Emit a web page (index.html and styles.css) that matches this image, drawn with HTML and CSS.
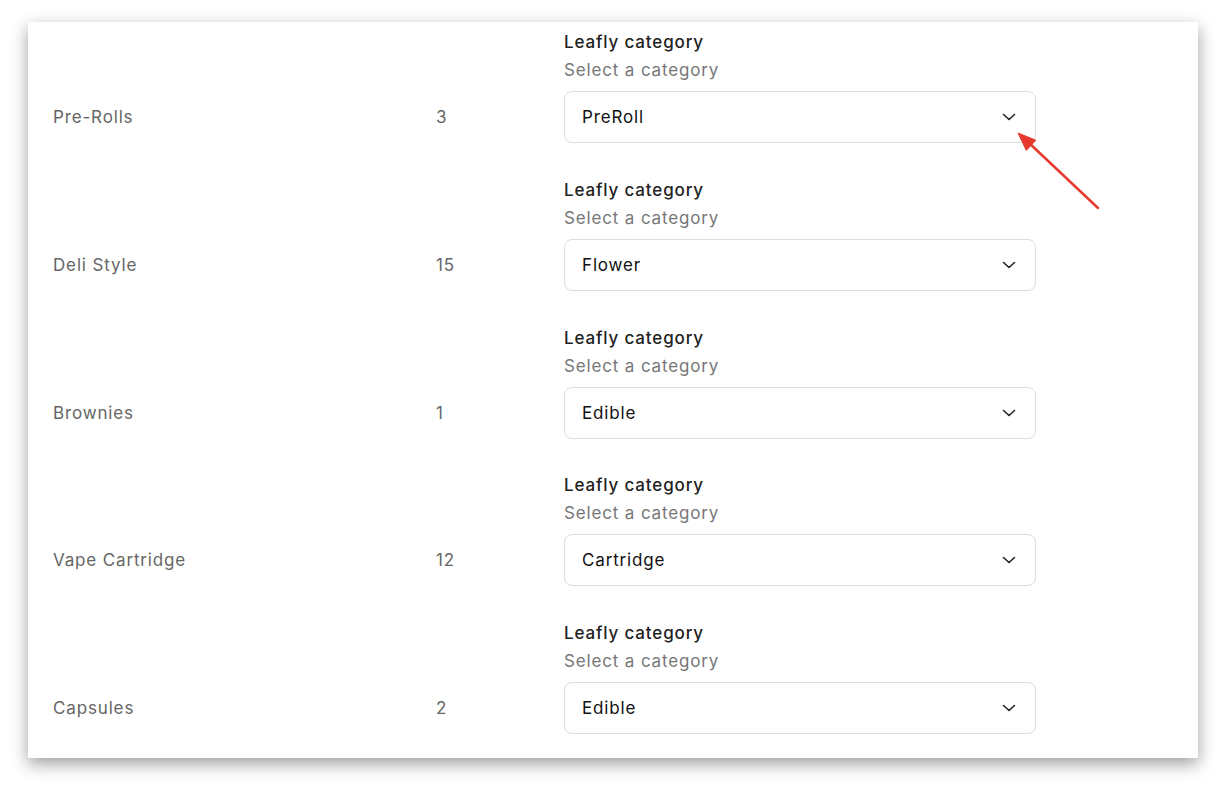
FILE: index.html
```html
<!DOCTYPE html>
<html lang="en">
<head>
    <meta charset="UTF-8">
    <title>Leafly category mapping</title>
    <link rel="stylesheet" href="styles.css">
</head>
<body>
    <div class="card">
        <div class="row">
            <div class="name">Pre-Rolls</div>
            <div class="count">3</div>
            <div class="field">
                <div class="label">Leafly category</div>
                <div class="hint">Select a category</div>
                <div class="select">
                    <span>PreRoll</span>
                    <svg class="chevron" width="16" height="16" viewBox="0 0 16 16"><path d="M2.5 5.5 8 10.5l5.5-5" fill="none" stroke="#222" stroke-width="1.6" stroke-linecap="round" stroke-linejoin="round"/></svg>
                </div>
            </div>
        </div>
        <div class="row">
            <div class="name">Deli Style</div>
            <div class="count">15</div>
            <div class="field">
                <div class="label">Leafly category</div>
                <div class="hint">Select a category</div>
                <div class="select">
                    <span>Flower</span>
                    <svg class="chevron" width="16" height="16" viewBox="0 0 16 16"><path d="M2.5 5.5 8 10.5l5.5-5" fill="none" stroke="#222" stroke-width="1.6" stroke-linecap="round" stroke-linejoin="round"/></svg>
                </div>
            </div>
        </div>
        <div class="row">
            <div class="name">Brownies</div>
            <div class="count">1</div>
            <div class="field">
                <div class="label">Leafly category</div>
                <div class="hint">Select a category</div>
                <div class="select">
                    <span>Edible</span>
                    <svg class="chevron" width="16" height="16" viewBox="0 0 16 16"><path d="M2.5 5.5 8 10.5l5.5-5" fill="none" stroke="#222" stroke-width="1.6" stroke-linecap="round" stroke-linejoin="round"/></svg>
                </div>
            </div>
        </div>
        <div class="row">
            <div class="name">Vape Cartridge</div>
            <div class="count">12</div>
            <div class="field">
                <div class="label">Leafly category</div>
                <div class="hint">Select a category</div>
                <div class="select">
                    <span>Cartridge</span>
                    <svg class="chevron" width="16" height="16" viewBox="0 0 16 16"><path d="M2.5 5.5 8 10.5l5.5-5" fill="none" stroke="#222" stroke-width="1.6" stroke-linecap="round" stroke-linejoin="round"/></svg>
                </div>
            </div>
        </div>
        <div class="row">
            <div class="name">Capsules</div>
            <div class="count">2</div>
            <div class="field">
                <div class="label">Leafly category</div>
                <div class="hint">Select a category</div>
                <div class="select">
                    <span>Edible</span>
                    <svg class="chevron" width="16" height="16" viewBox="0 0 16 16"><path d="M2.5 5.5 8 10.5l5.5-5" fill="none" stroke="#222" stroke-width="1.6" stroke-linecap="round" stroke-linejoin="round"/></svg>
                </div>
            </div>
        </div>

        <!-- annotation arrow pointing at the first dropdown -->
        <svg class="arrow" width="90" height="86" viewBox="0 0 90 86">
            <line x1="82" y1="79" x2="12" y2="13" stroke="#e63a2e" stroke-width="2.5" stroke-linecap="round"/>
            <path d="M2 4 19.9 11.2 10.3 21.4Z" fill="#e63a2e" stroke="#e63a2e" stroke-width="1" stroke-linejoin="round"/>
        </svg>
    </div>
</body>
</html>
```

FILE: styles.css
```css
body {
    font-family: 'Inter', sans-serif;
    background-color: #fff;
    margin: 0;
    padding: 0;
}
.card {
    position: relative;
    width: 1170px;
    height: 736px;
    margin: 22px 0 34px 28px;
    padding: 6px 0 0 25px;
    box-sizing: border-box;
    background: #fff;
    box-shadow: 0 6px 16px rgba(0, 0, 0, 0.38);
    display: flex;
    flex-direction: column;
    gap: 32.75px;
}
.row {
    display: grid;
    grid-template-columns: 383px 128px 472px;
    align-items: end;
    font-size: 17px;
    letter-spacing: 0.85px;
}
.name,
.count {
    color: #666;
    line-height: 52px;
}
.label {
    color: #222;
    font-weight: 500;
    line-height: 28px;
}
.hint {
    color: #777;
    line-height: 28px;
    margin-bottom: 7px;
}
.select {
    height: 52px;
    box-sizing: border-box;
    border: 1px solid #ddd;
    border-radius: 8px;
    padding: 0 18px 0 17px;
    display: flex;
    align-items: center;
    justify-content: space-between;
    color: #111;
}
.arrow {
    position: absolute;
    left: 988px;
    top: 107px;
}
```
